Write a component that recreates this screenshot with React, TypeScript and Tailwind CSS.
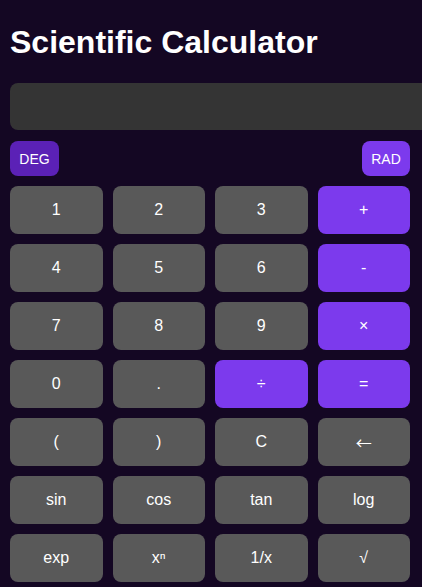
const rows: { label: string; op?: boolean; sym?: boolean }[][] = [
  [{ label: '1' }, { label: '2' }, { label: '3' }, { label: '+', op: true }],
  [{ label: '4' }, { label: '5' }, { label: '6' }, { label: '-', op: true }],
  [{ label: '7' }, { label: '8' }, { label: '9' }, { label: '×', op: true }],
  [{ label: '0' }, { label: '.' }, { label: '÷', op: true }, { label: '=', op: true }],
  [{ label: '(' }, { label: ')' }, { label: 'C' }, { label: '←', sym: true }],
  [{ label: 'sin' }, { label: 'cos' }, { label: 'tan' }, { label: 'log' }],
  [{ label: 'exp' }, { label: 'xⁿ' }, { label: '1/x' }, { label: '√' }],
]

export default function App() {
  return (
    <div className="min-h-[587px] overflow-hidden bg-[#140723] px-[10px] pt-[3px] text-white font-['Liberation_Sans',Arial,sans-serif]">
      <h1 className="mt-[21px] mb-[22px] text-[32px] font-bold leading-[37px] whitespace-nowrap">Scientific Calculator</h1>

      <div className="h-[47px] w-[430px] rounded-lg bg-[#343434]" />

      <div className="mt-[11px] flex w-[400px] items-center justify-between">
        <button className="h-[35px] w-[49px] rounded-lg bg-[#5b21b6] text-sm">DEG</button>
        <button className="h-[35px] w-[48px] rounded-lg bg-[#7c3aed] text-sm">RAD</button>
      </div>

      <div className="mt-[10px] grid w-[400px] grid-cols-4 gap-[10px]">
        {rows.flat().map((b, i) => (
          <button
            key={i}
            className={`h-[48px] rounded-lg text-base ${b.op ? 'bg-[#7c3aed]' : 'bg-[#595959]'} ${
              b.sym ? "font-['Noto_Sans_CJK_SC',sans-serif]" : ''
            }`}
          >
            {b.label}
          </button>
        ))}
      </div>
    </div>
  )
}
